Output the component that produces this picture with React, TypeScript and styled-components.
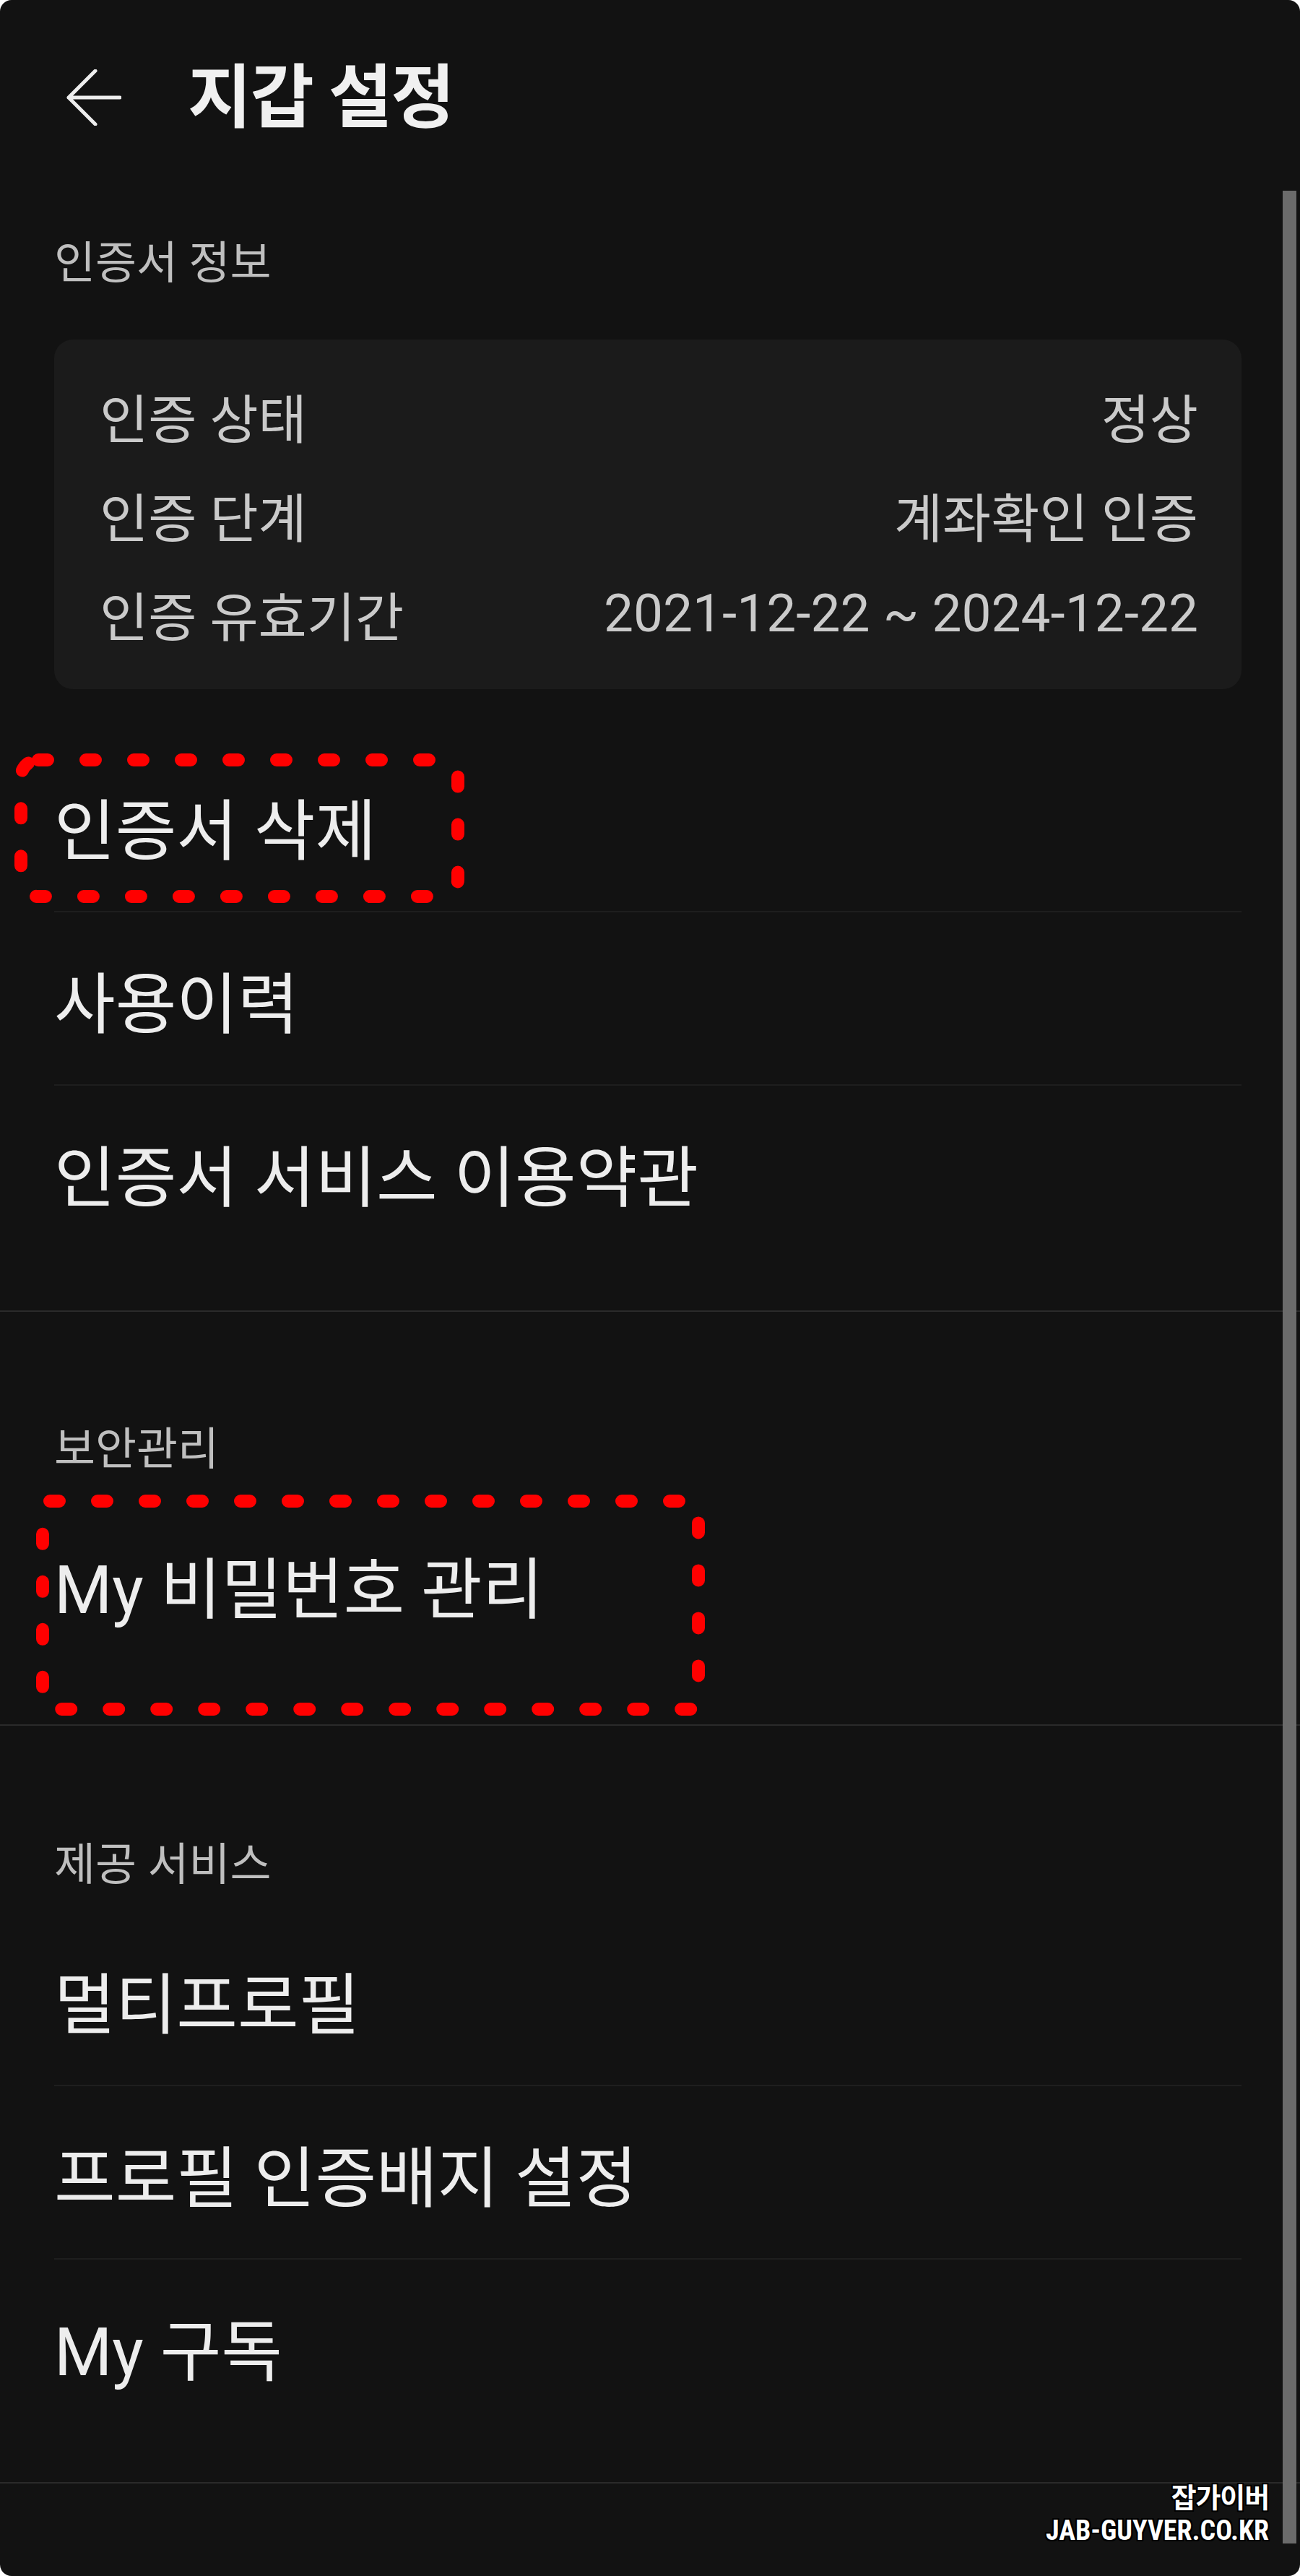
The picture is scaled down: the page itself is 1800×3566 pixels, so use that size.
import React, { FC } from 'react';
import styled, { createGlobalStyle } from 'styled-components';

const GlobalStyle = createGlobalStyle`
  html, body {
    margin: 0;
    padding: 0;
    background: #ffffff;
  }
  body {
    font-family: Roboto, 'Noto Sans CJK KR', sans-serif;
  }
`;

const Panel = styled.div`
  position: relative;
  width: 1800px;
  min-height: 3566px;
  background: #121212;
  border-radius: 16px;
  overflow: hidden;
  box-sizing: border-box;
`;

const Header = styled.header`
  display: flex;
  align-items: center;
  height: 270px;
  padding-left: 92px;
  gap: 92px;
`;

const Title = styled.h1`
  margin: 0;
  font-size: 96px;
  font-weight: 700;
  letter-spacing: -0.02em;
  color: #f0f0f0;
  line-height: 1;
`;

const Section = styled.section<{ $top: number; $bottom: number }>`
  padding: ${(p) => p.$top}px 81px ${(p) => p.$bottom}px 75px;
  border-bottom: 2px solid #2a2a2a;
`;

const Label = styled.div<{ $gap: number }>`
  font-size: 62px;
  line-height: 90px;
  color: #bfbfbf;
  margin-bottom: ${(p) => p.$gap}px;
`;

const Card = styled.div`
  background: #1b1b1b;
  border-radius: 26px;
  padding: 36px 60px 37px 63px;
  margin-bottom: 69px;
`;

const InfoRow = styled.div`
  display: flex;
  align-items: center;
  justify-content: space-between;
  height: 137px;
  font-size: 73px;
  color: #cacaca;
`;

const Item = styled.div`
  position: relative;
  display: flex;
  align-items: center;
  height: 238px;
  font-size: 92px;
  color: #ededed;

  & + & {
    border-top: 2px solid #1e1e1e;
  }
`;

const Mark = styled.svg`
  position: absolute;
  pointer-events: none;
  overflow: visible;
`;

const Scrollbar = styled.div`
  position: absolute;
  top: 264px;
  bottom: 45px;
  right: 5px;
  width: 19px;
  background: #6b6b6b;
`;

const Watermark = styled.div`
  position: absolute;
  right: 43px;
  bottom: 44px;
  display: flex;
  flex-direction: column;
  align-items: flex-end;
  gap: 8px;
  color: #ffffff;
  font-weight: 700;
  text-shadow: -2px 0 #000, 2px 0 #000, 0 -2px #000, 0 2px #000,
    -2px -2px #000, 2px 2px #000, -2px 2px #000, 2px -2px #000;
`;

const WatermarkName = styled.span`
  font-family: 'Noto Sans CJK KR', sans-serif;
  font-size: 38px;
  line-height: 42px;
  letter-spacing: -0.03em;
`;

const WatermarkUrl = styled.span`
  font-family: 'Liberation Sans Narrow', 'Roboto Condensed', Roboto, sans-serif;
  font-size: 38px;
  line-height: 38px;
`;

const BackArrow = () => (
  <svg width="76" height="78" viewBox="0 0 76 78" fill="none">
    <path
      d="M40 2 L3 39 L40 76 M3 39 H74"
      stroke="#ededed"
      strokeWidth="5"
      strokeLinecap="round"
      strokeLinejoin="round"
    />
  </svg>
);

type HighlightProps = {
  left: number;
  top: number;
  width: number;
  height: number;
  radius: number;
};

// red dotted annotation drawn over a row
const Highlight: FC<HighlightProps> = ({ left, top, width, height, radius }) => (
  <Mark
    width={width}
    height={height}
    style={{ left, top }}
    viewBox={`0 0 ${width} ${height}`}
  >
    <rect
      x="9"
      y="9"
      width={width - 18}
      height={height - 18}
      rx={radius}
      fill="none"
      stroke="#ff0000"
      strokeWidth="18"
      strokeLinecap="round"
      strokeDasharray="13 53"
    />
  </Mark>
);

const certInfo: Array<[string, string]> = [
  ['인증 상태', '정상'],
  ['인증 단계', '계좌확인 인증'],
  ['인증 유효기간', '2021-12-22 ~ 2024-12-22'],
];

export default function App() {
  return (
    <>
      <GlobalStyle />
      <Panel>
        <Header>
          <BackArrow />
          <Title>지갑 설정</Title>
        </Header>

        <Section $top={50} $bottom={73}>
          <Label $gap={60}>인증서 정보</Label>
          <Card>
            {certInfo.map(([name, value]) => (
              <InfoRow key={name}>
                <span>{name}</span>
                <span>{value}</span>
              </InfoRow>
            ))}
          </Card>
          <Item>
            인증서 삭제
            <Highlight left={-55} top={20} width={623} height={207} radius={24} />
          </Item>
          <Item>사용이력</Item>
          <Item>인증서 서비스 이용약관</Item>
        </Section>

        <Section $top={146} $bottom={76}>
          <Label $gap={21}>보안관리</Label>
          <Item>
            My 비밀번호 관리
            <Highlight left={-25} top={-4} width={926} height={306} radius={10} />
          </Item>
        </Section>

        <Section $top={148} $bottom={70}>
          <Label $gap={21}>제공 서비스</Label>
          <Item>멀티프로필</Item>
          <Item>프로필 인증배지 설정</Item>
          <Item>My 구독</Item>
        </Section>

        <Scrollbar />
        <Watermark>
          <WatermarkName>잡가이버</WatermarkName>
          <WatermarkUrl>JAB-GUYVER.CO.KR</WatermarkUrl>
        </Watermark>
      </Panel>
    </>
  );
}
